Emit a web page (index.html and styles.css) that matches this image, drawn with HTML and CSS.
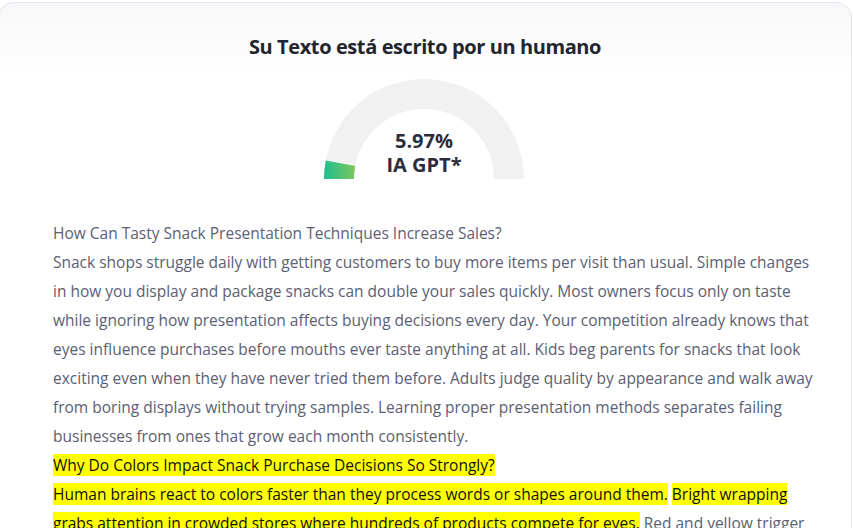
FILE: index.html
```html
<!DOCTYPE html>
<html>
<head>
<meta charset="utf-8">
<link rel="stylesheet" href="styles.css">
</head>
<body>
<div class="card">
  <h1 class="title">Su Texto está escrito por un humano</h1>
  <div class="gauge">
    <svg width="200" height="100" viewBox="0 0 200 100">
      <defs>
        <linearGradient id="g" x1="0" y1="0" x2="1" y2="0">
          <stop offset="0" stop-color="#1fbf8f"/>
          <stop offset="1" stop-color="#7dc65c"/>
        </linearGradient>
      </defs>
      <path d="M0 100 A100 100 0 0 1 200 100 L170 100 A70 70 0 0 0 30 100 Z" fill="#f1f1f1"/>
      <path d="M0 100 A100 100 0 0 1 1.74 81.4 L31.22 87 A70 70 0 0 0 30 100 Z" fill="url(#g)"/>
    </svg>
    <div class="gauge-label">
      <div>5.97%</div>
      <div>IA GPT*</div>
    </div>
  </div>
  <div class="text">
    How Can Tasty Snack Presentation Techniques Increase Sales?<br>
    Snack shops struggle daily with getting customers to buy more items per visit than usual. Simple changes in how you display and package snacks can double your sales quickly. Most owners focus only on taste while ignoring how presentation affects buying decisions every day. Your competition already knows that eyes influence purchases before mouths ever taste anything at all. Kids beg parents for snacks that look exciting even when they have never tried them before. Adults judge quality by appearance and walk away from boring displays without trying samples. Learning proper presentation methods separates failing businesses from ones that grow each month consistently.<br>
    <span class="hl">Why Do Colors Impact Snack Purchase Decisions So Strongly?</span><br>
    <span class="hl">Human brains react to colors faster than they process words or shapes around them.</span> <span class="hl">Bright wrapping grabs attention in crowded stores where hundreds of products compete for eyes.</span> Red and yellow trigger hunger signals while blue and green suggest healthy choices for careful shoppers.
  </div>
</div>
</body>
</html>
```
FILE: styles.css
```css
html, body {
  margin: 0;
  padding: 0;
  background: #ffffff;
  overflow: hidden;
}
body {
  width: 853px;
  height: 528px;
}
.card {
  margin: 2px 1px 0 -2px;
  border: 1px solid #e6e6ef;
  border-bottom: none;
  border-radius: 16px 16px 0 0;
  background: linear-gradient(to bottom, #f7f7f9 0px, #ffffff 70px);
  padding: 0 0 0 54px;
  height: 526px;
  overflow: hidden;
  box-sizing: border-box;
}
.title {
  margin: 0;
  padding-top: 31px;
  font-family: "Open Sans", sans-serif;
  font-weight: 700;
  font-size: 20px;
  line-height: 26px;
  color: #23252e;
  text-align: center;
  padding-right: 54px;
  letter-spacing: -0.4px;
}
.gauge {
  position: relative;
  width: 200px;
  height: 100px;
  margin: 19px 0 0 271px;
}
.gauge svg {
  display: block;
}
.gauge-label {
  position: absolute;
  left: 0;
  right: 0;
  top: 50px;
  text-align: center;
  font-family: "Open Sans", sans-serif;
  font-weight: 700;
  font-size: 20px;
  line-height: 24px;
  color: #2b2e3a;
}
.text {
  margin-top: 40px;
  width: 760px;
  font-family: "Open Sans", sans-serif;
  font-size: 15.5px;
  line-height: 29px;
  color: #5b6072;
}
.hl {
  background: #ffff00;
  color: #111111;
}
```
